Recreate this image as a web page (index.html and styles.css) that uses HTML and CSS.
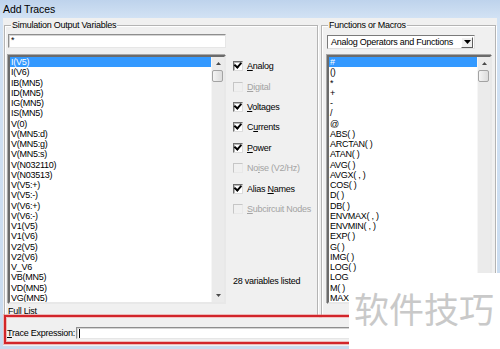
FILE: index.html
```html
<!DOCTYPE html>
<html lang="en">
<head>
  <meta charset="UTF-8">
  <meta name="viewport" content="width=device-width, initial-scale=1.0">
  <title>Add Traces</title>
  <link rel="stylesheet" href="styles.css">
</head>
<body>
<div class="window">
  <div class="titlebar">Add Traces</div>

  <div class="client">
    <div class="groups">

      <div class="group group-vars">
        <span class="group-label">Simulation Output Variables</span>

        <div class="vars-col">
          <div class="textbox filter">*</div>
          <div class="listbox vars-list">
            <ul class="items">
              <li class="selected">I(V5)</li>
              <li>I(V6)</li>
              <li>IB(MN5)</li>
              <li>ID(MN5)</li>
              <li>IG(MN5)</li>
              <li>IS(MN5)</li>
              <li>V(0)</li>
              <li>V(MN5:d)</li>
              <li>V(MN5:g)</li>
              <li>V(MN5:s)</li>
              <li>V(N032110)</li>
              <li>V(N03513)</li>
              <li>V(V5:+)</li>
              <li>V(V5:-)</li>
              <li>V(V6:+)</li>
              <li>V(V6:-)</li>
              <li>V1(V5)</li>
              <li>V1(V6)</li>
              <li>V2(V5)</li>
              <li>V2(V6)</li>
              <li>V_V6</li>
              <li>VB(MN5)</li>
              <li>VD(MN5)</li>
              <li>VG(MN5)</li>
            </ul>
            <div class="vscroll">
              <div class="sb-btn"><svg width="5" height="3" viewBox="0 0 5 3"><path d="M0 3 L2.5 0 L5 3 Z" fill="#4a4a4a"/></svg></div>
              <div class="sb-thumb"></div>
              <div class="sb-track"></div>
              <div class="sb-btn"><svg width="5" height="3" viewBox="0 0 5 3"><path d="M0 0 L5 0 L2.5 3 Z" fill="#4a4a4a"/></svg></div>
            </div>
          </div>
          <div class="full-list">Full List</div>
        </div>

        <div class="options-col">
          <div class="opt"><span class="check on"></span><span><u>A</u>nalog</span></div>
          <div class="opt disabled"><span class="check"></span><span><u>D</u>igital</span></div>
          <div class="opt"><span class="check on"></span><span><u>V</u>oltages</span></div>
          <div class="opt"><span class="check on"></span><span>C<u>u</u>rrents</span></div>
          <div class="opt"><span class="check on"></span><span><u>P</u>ower</span></div>
          <div class="opt disabled"><span class="check"></span><span>No<u>i</u>se (V2/Hz)</span></div>
          <div class="opt"><span class="check on"></span><span>Alias <u>N</u>ames</span></div>
          <div class="opt disabled"><span class="check"></span><span><u>S</u>ubcircuit Nodes</span></div>
          <div class="count">28 variables listed</div>
        </div>
      </div>

      <div class="group group-funcs">
        <span class="group-label">Functions or Macros</span>
        <div class="combo">
          <span class="combo-text">Analog Operators and Functions</span>
          <span class="combo-btn"><svg width="7" height="4" viewBox="0 0 7 4"><path d="M0 0 L7 0 L3.5 4 Z" fill="#000"/></svg></span>
        </div>
        <div class="listbox funcs-list">
          <ul class="items">
            <li class="selected">#</li>
            <li>()</li>
            <li>*</li>
            <li>+</li>
            <li>-</li>
            <li>/</li>
            <li>@</li>
            <li>ABS( )</li>
            <li>ARCTAN( )</li>
            <li>ATAN( )</li>
            <li>AVG( )</li>
            <li>AVGX( , )</li>
            <li>COS( )</li>
            <li>D( )</li>
            <li>DB( )</li>
            <li>ENVMAX( , )</li>
            <li>ENVMIN( , )</li>
            <li>EXP( )</li>
            <li>G( )</li>
            <li>IMG( )</li>
            <li>LOG( )</li>
            <li>LOG10( )</li>
            <li>M( )</li>
            <li>MAX( )</li>
          </ul>
          <div class="vscroll">
            <div class="sb-btn"><svg width="5" height="3" viewBox="0 0 5 3"><path d="M0 3 L2.5 0 L5 3 Z" fill="#4a4a4a"/></svg></div>
            <div class="sb-thumb"></div>
            <div class="sb-track"></div>
            <div class="sb-btn"><svg width="5" height="3" viewBox="0 0 5 3"><path d="M0 0 L5 0 L2.5 3 Z" fill="#4a4a4a"/></svg></div>
          </div>
        </div>
      </div>

    </div>

    <div class="trace-row">
      <span class="trace-label"><u>T</u>race Expression:</span>
      <div class="textbox trace-input"><span class="caret"></span></div>
    </div>
  </div>
</div>

<div class="highlight-box"></div>
<div class="watermark">软件技巧</div>
</body>
</html>
```

FILE: styles.css
```css
body {
  margin: 0;
  width: 500px;
  height: 349px;
  overflow: hidden;
  position: relative;
  font-family: "Liberation Sans", Arial, sans-serif;
  font-size: 9px;
  letter-spacing: -0.25px;
  color: #000;
  background: #c8daef;
}

.window {
  height: 349px;
  box-sizing: border-box;
  padding: 0 3px 3px 3px;
  display: flex;
  flex-direction: column;
  background: linear-gradient(#bed3ec, #d2e2f4 18px, #c9dbef);
}

.titlebar {
  height: 18px;
  flex: none;
  display: flex;
  align-items: center;
  font-size: 10.5px;
  letter-spacing: -0.1px;
  padding-bottom: 1px;
  box-sizing: border-box;
}

.client {
  flex: 1;
  background: #f0f0f0;
  padding: 7px 1px 0 1px;
  display: flex;
  flex-direction: column;
}

.groups {
  display: flex;
  gap: 3px;
}

.group {
  position: relative;
  height: 292px;
  box-sizing: border-box;
  border: 1px solid #b4b4b4;
  box-shadow: inset 1px 1px 0 #fff, 1px 1px 0 #fff;
}

.group-label {
  position: absolute;
  top: -6px;
  left: 6px;
  padding: 0 1px;
  line-height: 10px;
  background: #f0f0f0;
}

.group-vars {
  width: 314px;
  padding: 8px 0 0 3px;
  display: flex;
  gap: 7px;
}

.group-funcs {
  width: 175px;
  padding: 9px 0 0 5px;
}

.vars-col {
  width: 218px;
  display: flex;
  flex-direction: column;
}

.textbox {
  box-sizing: border-box;
  background: #fff;
  border: 1px solid;
  border-color: #8e8e8e #e6e6e6 #e6e6e6 #8e8e8e;
  box-shadow: inset 1px 1px 0 #d4d4d4;
}

.filter {
  height: 14px;
  padding-left: 2px;
  line-height: 11px;
}

.listbox {
  display: flex;
  box-sizing: border-box;
  height: 249px;
  background: #fff;
  border: 2px solid;
  border-color: #6b6b6b #e8e8e8 #e8e8e8 #6b6b6b;
  box-shadow: -1px -1px 0 #a8a8a8;
  overflow: hidden;
}

.vars-list {
  margin-top: 7px;
}

.items {
  list-style: none;
  margin: 0;
  padding: 0;
  flex: 1;
  min-width: 0;
}

.items li {
  height: 10.25px;
  line-height: 10.25px;
  padding-left: 1px;
  white-space: nowrap;
}

.items li.selected {
  background: #3399ff;
  color: #fff;
}

.vscroll {
  width: 12px;
  flex: none;
  display: flex;
  flex-direction: column;
  background: #ebebeb;
  border-left: 1px solid #f6f6f6;
}

.sb-btn {
  height: 13px;
  flex: none;
  display: flex;
  align-items: center;
  justify-content: center;
}

.sb-thumb {
  height: 12px;
  flex: none;
  margin: 0 1px 0 0;
  box-sizing: border-box;
  border: 1px solid #a3a3a3;
  border-radius: 2px;
  background: linear-gradient(90deg, #f4f4f4, #dcdcdc);
}

.sb-track {
  flex: 1;
}

.full-list {
  margin-top: 2px;
  line-height: 10px;
}

.options-col {
  flex: 1;
  padding-top: 22px;
  display: flex;
  flex-direction: column;
}

.opt {
  height: 20.4px;
  display: flex;
  align-items: center;
  gap: 4px;
  white-space: nowrap;
}

.opt.disabled {
  color: #a3a3a3;
}

.check {
  width: 10px;
  height: 10px;
  flex: none;
  box-sizing: border-box;
  background: #fff;
  border: 1px solid;
  border-color: #6e6e6e #dcdcdc #dcdcdc #6e6e6e;
  box-shadow: inset 1px 1px 0 #b8b8b8;
  position: relative;
}

.check.on::after {
  content: "";
  position: absolute;
  left: 1px;
  top: 0px;
  width: 5px;
  height: 2.5px;
  border-left: 2px solid #000;
  border-bottom: 2px solid #000;
  transform: rotate(-48deg);
  transform-origin: 45% 70%;
}

.opt.disabled .check {
  background: #f0f0f0;
  border-color: #c6c6c6 #e8e8e8 #e8e8e8 #c6c6c6;
  box-shadow: none;
}

.count {
  margin-top: 57px;
  line-height: 10px;
  white-space: nowrap;
}

.combo {
  width: 148px;
  height: 14px;
  box-sizing: border-box;
  display: flex;
  align-items: center;
  background: #fff;
  border: 1px solid;
  border-color: #7a7a7a #e0e0e0 #e0e0e0 #7a7a7a;
}

.combo-text {
  flex: 1;
  padding-left: 3px;
  white-space: nowrap;
}

.combo-btn {
  width: 12px;
  height: 11px;
  margin-right: 1px;
  box-sizing: border-box;
  display: flex;
  align-items: center;
  justify-content: center;
  background: #efefef;
  border: 1px solid;
  border-color: #fff #5e5e5e #5e5e5e #fff;
}

.funcs-list {
  width: 165px;
  margin-top: 6px;
}

.trace-row {
  margin-top: 10px;
  height: 12px;
  padding-left: 3px;
  display: flex;
  align-items: center;
  gap: 1px;
}

.trace-label {
  white-space: nowrap;
  line-height: 12px;
}

.trace-input {
  width: 400px;
  height: 12px;
  padding-left: 2px;
  display: flex;
  align-items: center;
}

.caret {
  width: 1px;
  height: 9px;
  background: #000;
}

/* annotation drawn on top of the dialog */
.highlight-box {
  position: absolute;
  left: 4px;
  top: 315px;
  width: 493px;
  height: 29px;
  box-sizing: border-box;
  border: 2px solid #d2252a;
  box-shadow: 0 0 0 1px rgba(230, 120, 120, 0.45), inset 0 0 0 1px rgba(230, 120, 120, 0.45);
}

.watermark {
  position: absolute;
  left: 349px;
  top: 273px;
  right: 0;
  bottom: 0;
  background: #fff;
  padding: 17px 0 0 5px;
  font-family: "Noto Sans CJK SC", sans-serif;
  font-size: 35px;
  letter-spacing: 0;
  line-height: 1;
  color: #c9c9c9;
  white-space: nowrap;
}
```
